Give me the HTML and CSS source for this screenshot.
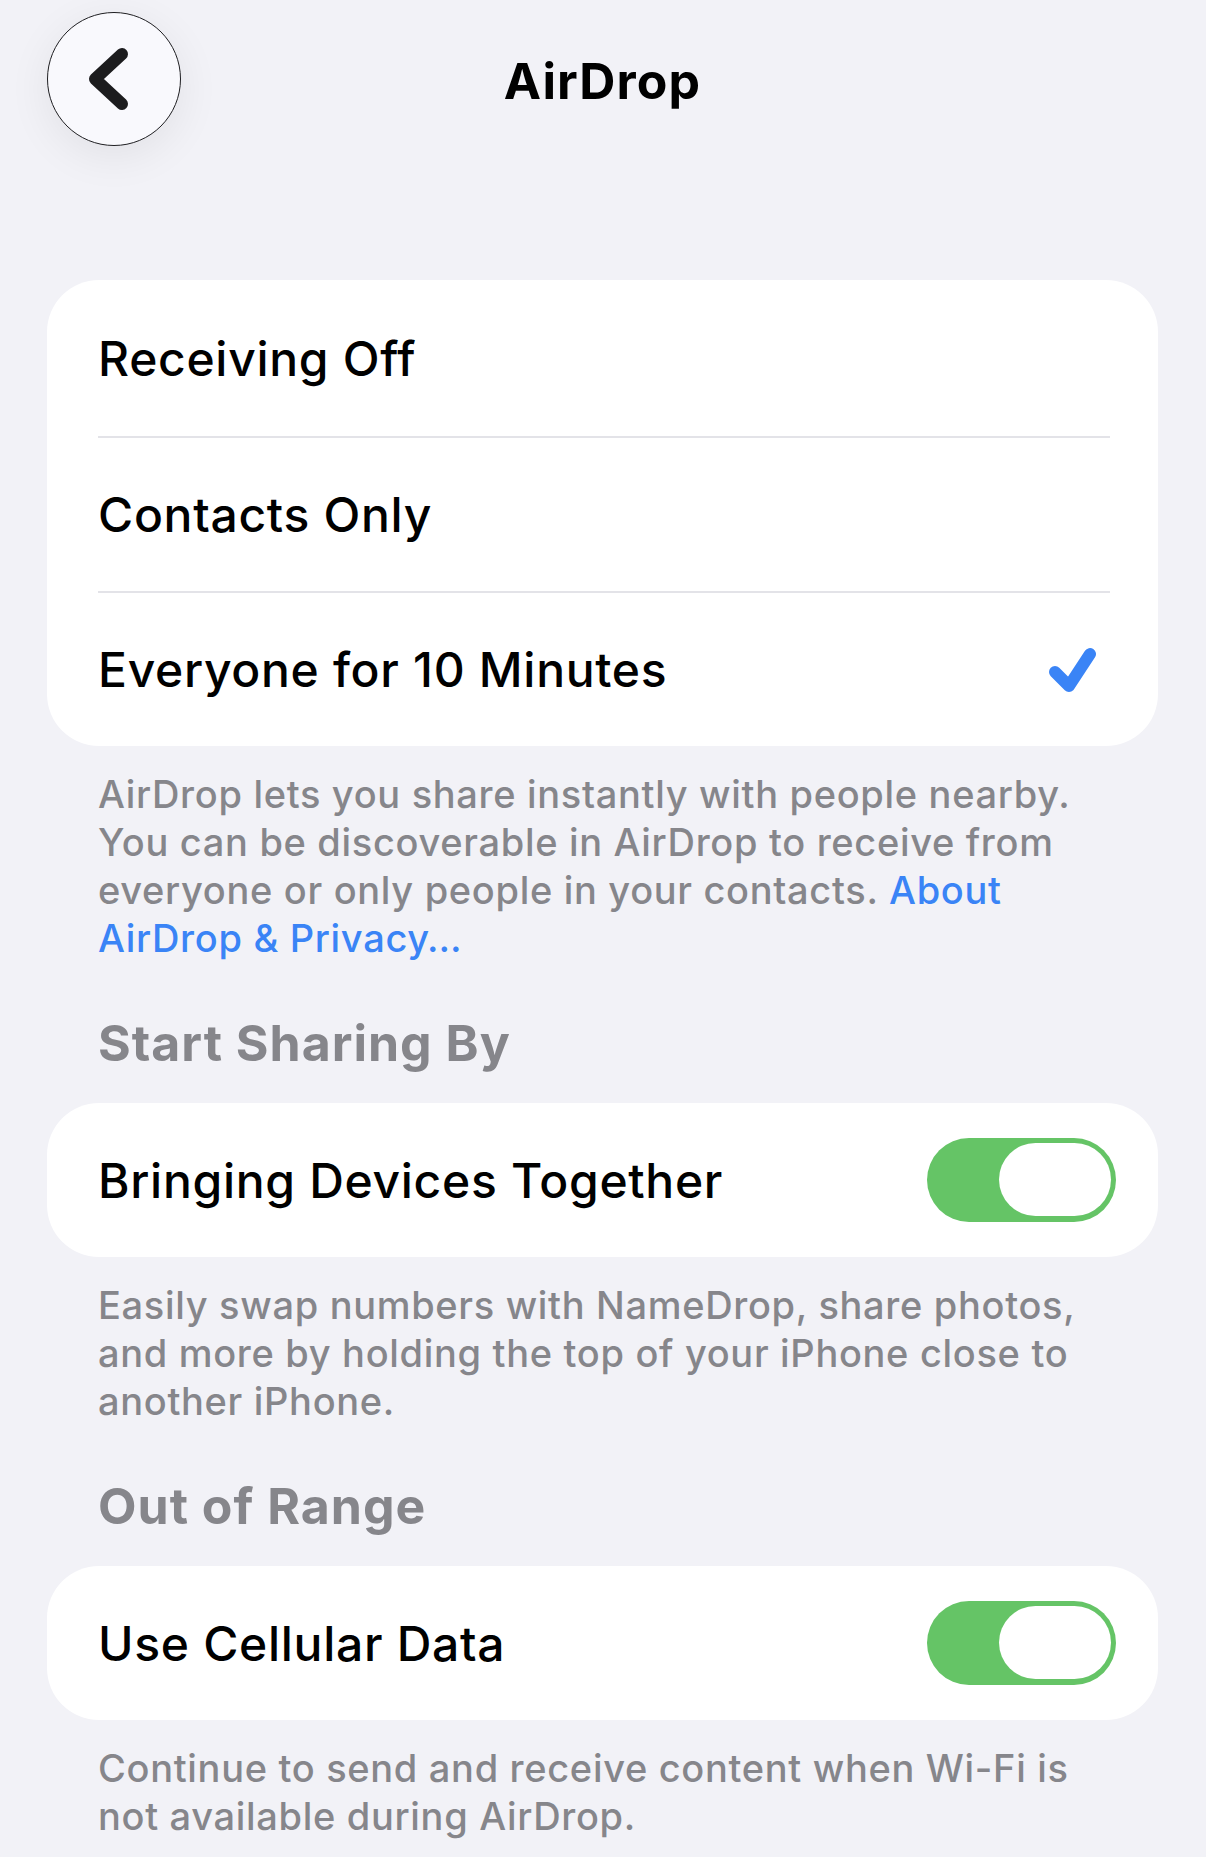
FILE: index.html
```html
<!DOCTYPE html>
<html lang="en">
<head>
<meta charset="utf-8">
<title>AirDrop</title>
<link rel="stylesheet" href="styles.css">
</head>
<body>
  <header class="nav">
    <button class="back" aria-label="Back">
      <svg class="back-icon" viewBox="0 0 134 134" width="134" height="134">
        <path d="M75 42 L48 67 L75 92"/>
      </svg>
    </button>
    <h1 class="title">AirDrop</h1>
    <span class="nav-spacer"></span>
  </header>

  <main class="content">
    <ul class="group">
      <li class="row">Receiving Off</li>
      <li class="row">Contacts Only</li>
      <li class="row row-selected">
        <span>Everyone for 10 Minutes</span>
        <svg class="check" viewBox="0 0 48 46" width="48" height="46">
          <path d="M6 25 L20 39 L41 7"/>
        </svg>
      </li>
    </ul>
    <p class="note">AirDrop lets you share instantly with people nearby. You can be discoverable in AirDrop to receive from everyone or only people in your contacts. <a class="link" href="#">About AirDrop &amp; Privacy…</a></p>

    <h2 class="section-title">Start Sharing By</h2>
    <ul class="group">
      <li class="row">
        <span>Bringing Devices Together</span>
        <span class="switch" role="switch" aria-checked="true"><span class="knob"></span></span>
      </li>
    </ul>
    <p class="note">Easily swap numbers with NameDrop, share photos, and more by holding the top of your iPhone close to another iPhone.</p>

    <h2 class="section-title">Out of Range</h2>
    <ul class="group">
      <li class="row">
        <span>Use Cellular Data</span>
        <span class="switch" role="switch" aria-checked="true"><span class="knob"></span></span>
      </li>
    </ul>
    <p class="note">Continue to send and receive content when Wi-Fi is not available during AirDrop.</p>
  </main>
</body>
</html>
```

FILE: styles.css
```css
* {
  box-sizing: border-box;
}

html,
body {
  margin: 0;
  padding: 0;
  background: #f2f2f7;
}

body {
  font-family: Inter, "Noto Sans", "Liberation Sans", sans-serif;
  color: #000;
  -webkit-font-smoothing: antialiased;
}

/* Navigation bar */
.nav {
  display: grid;
  grid-template-columns: 1fr auto 1fr;
  align-items: center;
  padding: 12px 48px 0 47px;
}

.back {
  width: 134px;
  height: 134px;
  padding: 0;
  border: 1.5px solid #1f1f22;
  border-radius: 50%;
  background: #f9f9fd;
  box-shadow: 0 10px 44px rgba(0, 0, 0, 0.07);
  display: flex;
  align-items: center;
  justify-content: center;
}

.back-icon {
  display: block;
  margin: -1.5px;
  fill: none;
  stroke: #1c1c1e;
  stroke-width: 12;
  stroke-linecap: round;
  stroke-linejoin: round;
}

.title {
  margin: 0;
  font-size: 50px;
  font-weight: 700;
  letter-spacing: 1.1px;
  line-height: 1;
  padding-top: 3px;
}

/* Page content */
.content {
  padding: 134px 48px 40px 47px;
}

.group {
  list-style: none;
  margin: 0;
  padding: 0 48px 0 51px;
  background: #fff;
  border-radius: 52px;
}

.row {
  height: 154px;
  display: flex;
  align-items: center;
  justify-content: space-between;
  font-size: 48px;
  font-weight: 500;
  letter-spacing: 0.7px;
}

.row:first-child:not(:only-child) {
  height: 156px;
}

.row + .row {
  height: 155px;
  border-top: 2px solid #e3e3e8;
}

.check {
  display: block;
  margin-right: 13px;
  fill: none;
  stroke: #3a84f6;
  stroke-width: 12;
  stroke-linecap: round;
  stroke-linejoin: round;
}

.switch {
  width: 189px;
  height: 84px;
  border-radius: 42px;
  background: #65c466;
  display: flex;
  align-items: center;
  justify-content: flex-end;
  padding: 0 5px 1px;
  margin-right: -6px;
}

.knob {
  width: 112px;
  height: 73px;
  border-radius: 37px;
  background: #fff;
}

.note {
  margin: 24px 48px 0 51px;
  font-size: 38px;
  line-height: 48px;
  font-weight: 450;
  color: #86868b;
  letter-spacing: 0.68px;
}

.link {
  color: #3a84f6;
  text-decoration: none;
}

.section-title {
  margin: 53px 0 32px 51px;
  font-size: 50px;
  line-height: 56px;
  font-weight: 700;
  color: #86868b;
  letter-spacing: 1px;
}
```
